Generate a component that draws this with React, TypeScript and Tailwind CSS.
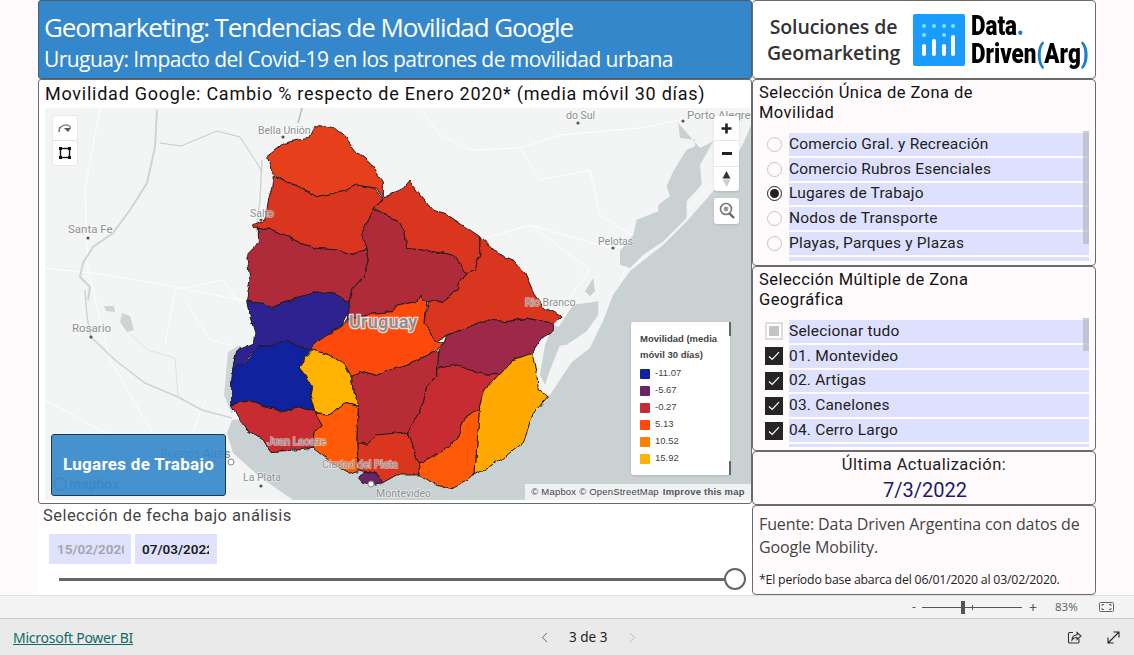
import { ChevronLeft, ChevronRight } from "lucide-react";

const din = "font-['Roboto','Noto_Sans',sans-serif]";
const segoe = "font-['Open_Sans','Noto_Sans',sans-serif]";

// departamentos, traced at 3x with origin 220,120
const depts: { c: string; p: string }[] = [
  { c: "#e63f1c", p: "140,110 160,95 190,70 235,60 265,55 280,25 300,17 340,22 375,50 410,95 450,130 490,185 490,232 470,205 410,195 370,215 320,225 290,230 255,210 200,185 160,160 150,130" },
  { c: "#d9351f", p: "160,165 200,185 255,210 290,230 370,215 410,195 465,205 487,235 460,268 428,345 438,380 410,405 350,390 290,385 240,370 190,345 150,325 105,325 100,315 130,300 140,270 145,240 155,205" },
  { c: "#b02b3a", p: "115,325 150,325 190,345 240,370 290,385 350,390 405,405 438,383 445,420 430,470 395,510 388,545 350,525 300,515 240,530 200,545 155,565 120,550 80,540 90,480 80,405 115,370" },
  { c: "#2e2291", p: "80,540 120,550 155,565 200,545 240,530 300,515 350,525 388,545 385,580 365,620 330,640 300,660 270,690 235,680 200,660 160,675 120,675 90,710 38,750 50,690 100,670 105,640 90,590" },
  { c: "#10229d", p: "38,750 90,715 120,675 160,675 200,660 235,680 270,690 237,742 255,765 275,800 270,825 283,875 240,860 190,875 130,860 85,840 35,855 35,780" },
  { c: "#b02b3a", p: "460,270 530,300 555,335 560,385 610,390 700,405 740,462 720,480 715,510 670,545 620,545 600,530 590,545 535,555 520,575 450,580 385,600 388,545 395,510 430,470 445,420 438,380 425,345" },
  { c: "#d9351f", p: "460,268 487,235 550,205 570,180 590,210 640,270 675,280 720,310 780,350 780,400 765,450 740,462 700,405 610,390 560,385 555,335 530,300" },
  { c: "#d9351f", p: "780,350 830,400 880,420 915,460 940,515 975,565 1025,590 1000,610 920,595 860,605 800,600 735,625 680,650 650,665 615,610 625,545 670,545 715,510 720,480 740,462 765,450 780,400" },
  { c: "#fb4a0c", p: "620,545 615,610 650,665 672,672 630,705 570,730 520,745 470,770 420,755 395,770 375,735 330,705 275,690 270,690 300,660 330,640 365,620 385,600 450,580 520,575 535,555 590,545 600,530" },
  { c: "#9d2848", p: "680,650 735,625 800,600 860,605 920,595 1000,610 1000,635 960,660 935,700 880,720 835,765 775,760 710,735 665,745 650,745 657,690 672,672" },
  { c: "#ffb300", p: "275,690 330,705 375,735 395,775 400,820 415,860 375,850 335,882 285,878 270,825 275,800 255,765 237,742" },
  { c: "#b82c36", p: "395,770 420,755 470,770 520,745 570,730 630,705 657,690 650,770 620,800 610,850 590,890 565,935 510,945 470,945 440,975 410,965 415,860 400,820" },
  { c: "#c62c32", p: "650,745 710,735 775,760 835,765 795,810 778,870 735,895 710,960 660,1000 595,1030 565,935 590,890 610,850 620,800 650,770" },
  { c: "#ffa800", p: "935,700 950,760 955,810 985,828 940,880 910,965 850,1015 765,1065 770,985 778,870 795,810 835,765 880,720" },
  { c: "#ff5a08", p: "778,870 770,985 765,1065 690,1105 640,1090 600,1065 595,1030 660,1000 710,960 735,895" },
  { c: "#d9351f", p: "410,965 440,975 470,945 565,935 595,1030 600,1065 530,1065 485,1090 475,1060 440,1055 415,1050 415,1020" },
  { c: "#6c2468", p: "412,1070 440,1055 475,1060 487,1088 450,1095 430,1090" },
  { c: "#ff5a08", p: "283,880 335,882 375,850 415,860 410,965 415,1050 390,1060 350,1040 280,985 285,935 305,915" },
  { c: "#c62c32", p: "35,855 85,840 130,860 190,875 240,860 283,875 305,915 285,935 280,985 230,990 150,995 130,960 80,930 50,885" },
];

const roads = [
  "45,268 100,274 155,283 240,300 260,302",
  "100,108 85,190 88,270 110,360 145,420 175,470",
  "165,345 175,290 222,280 262,330",
  "420,108 440,135 470,150 520,148 560,135 640,128 680,120",
  "520,148 540,180 590,170 600,215 640,240 620,280",
  "530,225 600,245 650,250 680,215 720,175",
  "480,240 530,225 590,270 560,310",
  "45,400 100,430 180,455 230,470",
  "185,300 210,340 230,345",
  "205,400 190,440",
];

const names = ["Comercio Gral. y Recreación", "Comercio Rubros Esenciales", "Lugares de Trabajo", "Nodos de Transporte", "Playas, Parques y Plazas"];
const zones = ["01. Montevideo", "02. Artigas", "03. Canelones", "04. Cerro Largo"];
const legend = [
  { c: "#10229d", t: "-11.07" },
  { c: "#6c2468", t: "-5.67" },
  { c: "#c62c32", t: "-0.27" },
  { c: "#fb4a0c", t: "5.13" },
  { c: "#ff8000", t: "10.52" },
  { c: "#ffb300", t: "15.92" },
];

function Label({ x, y, t, size = 10.5, fill = "#8d9192" }: { x: number; y: number; t: string; size?: number; fill?: string }) {
  return (
    <text x={x} y={y} fontSize={size} fill={fill} stroke="#ffffff" strokeOpacity={0.55} strokeWidth={1.6} paintOrder="stroke" fontFamily="Roboto, sans-serif">
      {t}
    </text>
  );
}

function UyMap() {
  return (
    <svg viewBox="45 108 706 392" className="absolute inset-0 w-full h-full">
      <defs>
        <filter id="rough" x="-5%" y="-5%" width="110%" height="110%" colorInterpolationFilters="sRGB">
          <feTurbulence type="fractalNoise" baseFrequency="0.1" numOctaves="2" seed="4" />
          <feDisplacementMap in="SourceGraphic" scale="5" xChannelSelector="R" yChannelSelector="G" />
        </filter>
      </defs>
      <rect x="45" y="108" width="706" height="392" fill="#f3f4f4" />
      {roads.map((r, i) => (
        <polyline key={i} points={r} fill="none" stroke="#ffffff" strokeWidth="1" />
      ))}
      {/* oceano y rio de la plata */}
      <polygon fill="#c9d1d3" points="751,125 747,135 730,171 710,195 687,221 663,245 630,271 613,295 603,321 590,348 572,362 565,372 550,395 400,400 232,420 227,433 233,453 260,477 293,500 751,500" />
      {/* lagoas */}
      <g transform="translate(530,108) scale(0.3333)" fill="#c9d1d3">
        <polygon points="445,45 450,90 495,95 495,115 470,125 445,165 430,190 410,235 420,265 385,290 385,310 320,335 310,380 270,430 270,470 300,480 340,440 400,400 440,360 470,330 470,280 515,230 510,170 550,100 510,120" />
        <polygon points="205,580 205,620 170,670 110,710 50,720 90,650 130,590" />
        <polygon points="165,550 190,510 195,550 180,565" />
      </g>
      <polygon fill="#c9d1d3" points="553,325 545,345 540,375 545,385 550,370 560,345 570,330" />
      {/* rios */}
      <polyline points="157,110 155,147 147,183 130,210 113,233 93,247 83,263 80,277 90,287 88,300" fill="none" stroke="#ced5d7" strokeWidth="2" />
      <polyline points="85,290 87,317 91,337 115,360 145,383 178,397 202,410 232,418" fill="none" stroke="#ced5d7" strokeWidth="1.5" />
      <polyline points="131,335 148,350 175,358 178,397" fill="none" stroke="#d5dadc" strokeWidth="0.8" />
      <polygon points="122,313 120,322 127,332 134,330 130,316" fill="#ced5d7" />
      <polygon points="104,306 106,311 115,312 114,306" fill="#ced5d7" />
      <polyline points="262,160 260,200 256,230" fill="none" stroke="#ced5d7" strokeWidth="1.5" />
      <polygon fill="#ced5d7" points="240,345 228,352 224,395 232,415 236,395 245,355" />
      {/* frontera */}
      <polyline points="160,143 181,146 217,131 240,137 257,163 262,172" fill="none" stroke="#c4c8c9" strokeWidth="1" />
      <polyline points="302,108 298,123" fill="none" stroke="#b9bdbe" strokeWidth="1.5" />
      <g filter="url(#rough)">
        <g transform="translate(220,120) scale(0.3333)" stroke="#1f1a1a" strokeWidth="3" strokeLinejoin="round">
          {depts.map((d, i) => (
            <polygon key={i} points={d.p} fill={d.c} />
          ))}
        </g>
      </g>
      <Label x={258} y={134} t="Bella Unión" />
      <Label x={250} y={217} t="Salto" />
      <Label x={68} y={233} t="Santa Fe" size={11.5} />
      <Label x={72} y={332} t="Rosario" size={11.5} />
      <Label x={566} y={119} t="do Sul" />
      <Label x={687} y={119} t="Porto Alegre" size={11.5} />
      <Label x={598} y={245} t="Pelotas" />
      <Label x={525} y={306} t="Rio Branco" />
      <Label x={160} y={458} t="Buenos Aires" size={12} fill="#7d8182" />
      <Label x={243} y={481} t="La Plata" />
      <Label x={267} y={445} t="Juan Lacaze" />
      <Label x={322} y={468} t="Ciudad del Plata" />
      <Label x={376} y={497} t="Montevideo" />
      <text x={349} y={328} fontSize={18} fontWeight={600} fill="#8a8f96" stroke="#ffffff" strokeOpacity={0.8} strokeWidth={2.5} paintOrder="stroke" fontFamily="Roboto, sans-serif" letterSpacing={0.2}>
        Uruguay
      </text>
      {[[283, 137], [261, 220], [88, 238], [91, 337], [578, 123], [683, 121], [613, 248], [548, 310], [261, 486], [293, 449], [357, 472]].map(([x, y], i) => (
        <circle key={i} cx={x} cy={y} r="1.6" fill="#555" />
      ))}
      <circle cx="231" cy="462" r="3" fill="#fff" stroke="#888" />
      <circle cx="371" cy="484" r="3" fill="#fff" stroke="#888" />
      <g fill="#8d9499" fontFamily="Roboto, sans-serif">
        <circle cx="60" cy="484" r="6" fill="none" stroke="#8d9499" strokeWidth="2" />
        <text x={69} y={489} fontSize={14} fontWeight={700}>mapbox</text>
      </g>
    </svg>
  );
}

function MapControls() {
  return (
    <>
      <div className="absolute left-[7px] top-[7px] w-[26px] h-[51px] bg-white rounded-[3px] border border-[#e8e8e8] flex flex-col">
        <div className="h-[25px] flex items-center justify-center border-b border-[#e2e2e2]">
          <svg width="16" height="14" viewBox="0 0 16 14" fill="none" stroke="#777" strokeWidth="1.2">
            <path d="M2 11 C2 3 13 2 13.5 7" />
            <path d="M2 11 L2.5 6" />
            <path d="M7 7 L14 7 L11 11 Z" fill="#555" stroke="none" />
          </svg>
        </div>
        <div className="flex-1 flex items-center justify-center">
          <svg width="14" height="14" viewBox="0 0 14 14" fill="none">
            <rect x="2.5" y="2.5" width="9" height="9" stroke="#111" strokeWidth="1.4" />
            <rect x="1" y="1" width="3" height="3" fill="#111" />
            <rect x="10" y="1" width="3" height="3" fill="#111" />
            <rect x="1" y="10" width="3" height="3" fill="#111" />
            <rect x="10" y="10" width="3" height="3" fill="#111" />
          </svg>
        </div>
      </div>
      <div className="absolute left-[669px] top-[8px] w-[25px] h-[75px] bg-white rounded-[3px] shadow-sm flex flex-col divide-y divide-[#e6e6e6]">
        <div className="flex-1 flex items-center justify-center">
          <svg width="11" height="11" viewBox="0 0 11 11"><path d="M4.2 0.5h2.6v3.7h3.7v2.6H6.8v3.7H4.2V6.8H0.5V4.2h3.7z" fill="#222" /></svg>
        </div>
        <div className="flex-1 flex items-center justify-center">
          <div className="w-[10px] h-[3px] bg-[#222]" />
        </div>
        <div className="flex-1 flex items-center justify-center">
          <svg width="9" height="18" viewBox="0 0 9 18">
            <path d="M4.5 1 L8.5 8.5 H0.5 Z" fill="#333" />
            <path d="M4.5 17 L8.5 9.5 H0.5 Z" fill="#ccc" />
          </svg>
        </div>
      </div>
      <div className="absolute left-[669px] top-[90px] w-[25px] h-[26px] bg-white rounded-[3px] shadow-sm flex items-center justify-center">
        <svg width="18" height="18" viewBox="0 0 18 18" fill="none">
          <circle cx="8" cy="7" r="5.5" stroke="#777" strokeWidth="1.6" />
          <circle cx="8" cy="7" r="2.4" fill="#999" />
          <path d="M11.5 11.5 L16 16" stroke="#666" strokeWidth="2.4" />
        </svg>
      </div>
    </>
  );
}

function MapLegend() {
  return (
    <div className="absolute left-[586px] top-[214px] w-[99px] h-[153px] bg-white rounded-[3px] shadow pl-[9px] pt-[9px] font-['Liberation_Sans',sans-serif] text-[#444]">
      <div className="absolute right-[-1px] top-0 w-[2px] h-[14px] bg-[#666]" />
      <div className="absolute right-[-1px] bottom-0 w-[2px] h-[14px] bg-[#666]" />
      <div className="text-[9.5px] font-bold leading-[16px]">Movilidad (media<br />móvil 30 días)</div>
      <div className="mt-[2px] flex flex-col">
        {legend.map((l) => (
          <div key={l.t} className="h-[17px] flex items-center gap-[5px] text-[9.5px]">
            <span className="w-[10px] h-[10px] rounded-[1px]" style={{ background: l.c }} />
            {l.t}
          </div>
        ))}
      </div>
    </div>
  );
}

function RadioList() {
  return (
    <div className="relative mt-[10px] ml-[8px] flex flex-col gap-[2px]">
      {names.map((n, i) => (
        <div key={n} className="flex items-center h-[22.8px]">
          <span className={`w-[15px] h-[15px] rounded-full border flex items-center justify-center shrink-0 ${i === 2 ? "border-[#222]" : "border-[#c9c4c4]"}`}>
            {i === 2 && <span className="w-[9px] h-[9px] rounded-full bg-[#222]" />}
          </span>
          <span className={`ml-[7px] w-[300px] h-full flex items-center bg-[#dee1fd] text-[15.5px] tracking-[0.2px] text-[#222] ${din}`}>{n}</span>
        </div>
      ))}
      <div className="ml-[22px] w-[300px] h-[4px] bg-[#dee1fd]" />
      <div className="absolute left-[316px] top-[-2px] w-[6px] h-[113px] bg-[#b8b8c0]/70" />
    </div>
  );
}

function CheckList() {
  return (
    <div className="relative mt-[10px] ml-[6px] flex flex-col gap-[2px]">
      <div className="flex items-center h-[22.8px]">
        <span className="w-[18px] h-[18px] border-2 border-[#ddd] bg-white flex items-center justify-center shrink-0">
          <span className="w-[10px] h-[10px] bg-[#c4c4c4]" />
        </span>
        <span className={`ml-[6px] w-[300px] h-full flex items-center bg-[#dee1fd] text-[15.5px] tracking-[0.2px] text-[#222] ${din}`}>Selecionar tudo</span>
      </div>
      {zones.map((z) => (
        <div key={z} className="flex items-center h-[22.8px]">
          <span className="w-[18px] h-[18px] bg-[#252525] flex items-center justify-center shrink-0">
            <svg width="12" height="10" viewBox="0 0 12 10" fill="none"><path d="M1 5.5 L4.2 8.5 L11 1.2" stroke="#fff" strokeWidth="1.2" /></svg>
          </span>
          <span className={`ml-[6px] w-[300px] h-full flex items-center bg-[#dee1fd] text-[15.5px] tracking-[0.2px] text-[#222] ${din}`}>{z}</span>
        </div>
      ))}
      <div className="ml-[24px] w-[300px] h-[3px] bg-[#dee1fd]" />
      <div className="absolute left-[318px] top-[-2px] w-[6px] h-[33px] bg-[#b8b8c0]/70" />
    </div>
  );
}

function Logo() {
  return (
    <div className="flex items-center">
      <svg width="52" height="52" viewBox="0 0 52 52" className="shrink-0">
        <rect width="52" height="52" rx="2" fill="#1a9cff" />
        {[11, 21, 31, 40].map((x) => (
          <circle key={x} cx={x} cy="12" r="2" fill="#7fe6ff" />
        ))}
        <circle cx="11" cy="21" r="2" fill="#7fe6ff" />
        <circle cx="31" cy="21" r="2" fill="#7fe6ff" />
        <rect x="9" y="30" width="4" height="12" rx="2" fill="#fff" />
        <rect x="19" y="25" width="4" height="17" rx="2" fill="#fff" />
        <rect x="29" y="30" width="4" height="12" rx="2" fill="#fff" />
        <rect x="38" y="21" width="4" height="21" rx="2" fill="#fff" />
      </svg>
      <div className="ml-[6px] w-[116px] font-['Roboto',sans-serif] font-black text-[28px] leading-[28px] text-black">
        <div className="origin-left scale-x-[0.8] whitespace-nowrap">Data<span className="text-[#1a7fc9]">.</span></div>
        <div className="origin-left scale-x-[0.8] whitespace-nowrap">Driven<span className="text-[#1a7fc9]">(</span>Arg<span className="text-[#1a7fc9]">)</span></div>
      </div>
    </div>
  );
}

export default function App() {
  const panel = "border border-[#6b6b6b] rounded-[4px] bg-[#fffafb]";
  return (
    <div className="w-[1134px] h-[655px] flex flex-col overflow-hidden bg-[#fffafb]">
      <div className="h-[595px] flex pl-[38px]">
        {/* columna izquierda */}
        <div className="w-[714px] flex flex-col">
          <div className="h-[79px] bg-[#3387ca] border border-[#4a6070] rounded-[3px] pl-[5px] pt-[8px] text-white font-['Open_Sans',sans-serif]">
            <div className="text-[26px] leading-[36px] tracking-[-1.1px] whitespace-nowrap">Geomarketing: Tendencias de Movilidad Google</div>
            <div className="text-[21px] leading-[28px] tracking-[-0.55px] whitespace-nowrap">Uruguay: Impacto del Covid-19 en los patrones de movilidad urbana</div>
          </div>
          <div className="h-[425px] bg-white border border-[#6b6b6b] rounded-[3px] pl-[6px]">
            <div className={`h-[27px] flex items-center text-[18px] text-[#111] tracking-[0.75px] whitespace-nowrap ${din}`}>
              Movilidad Google: Cambio % respecto de Enero 2020* (media móvil 30 días)
            </div>
            <div className="relative mt-[1px] w-[706px] h-[392px] overflow-hidden">
              <UyMap />
              <MapControls />
              <MapLegend />
              <div className={`absolute left-[6px] top-[326px] w-[175px] h-[62px] bg-[#3387ca]/90 border border-[#1c3a52] rounded-[3px] flex items-center justify-center text-white text-[17px] tracking-[0.3px] font-bold ${din}`}>
                Lugares de Trabajo
              </div>
              <div className="absolute right-0 bottom-0 w-[226px] h-[16px] bg-white/70 flex items-center justify-center gap-[4px] text-[9.5px] text-[#444] tracking-[0.2px] font-['Liberation_Sans',sans-serif]">
                <span>© Mapbox © OpenStreetMap</span>
                <span className="font-bold text-[#555]">Improve this map</span>
              </div>
            </div>
          </div>
          <div className="flex-1 bg-white pl-[5px]">
            <div className={`pt-[1px] text-[16.5px] leading-[22px] text-[#444] tracking-[0.45px] ${din}`}>Selección de fecha bajo análisis</div>
            <div className={`mt-[7px] ml-[6px] flex gap-[4px] text-[13.5px] font-semibold ${din}`}>
              <div className="w-[82px] h-[30px] bg-[#dfe1fd] pl-[8px] flex items-center text-[#a4a4ac]">
                <span className="block w-[67px] overflow-hidden whitespace-nowrap">15/02/2020</span>
              </div>
              <div className="w-[82px] h-[30px] bg-[#dfe1fd] pl-[7px] flex items-center text-[#1c1c1c]">
                <span className="block w-[67px] overflow-hidden whitespace-nowrap">07/03/2022</span>
              </div>
            </div>
            <div className="relative mt-[14px] ml-[16px] w-[676px] h-[3px] bg-[#666]">
              <div className="absolute right-[-11px] top-[-10px] w-[22px] h-[22px] rounded-full bg-white border-2 border-[#666]" />
            </div>
          </div>
        </div>
        {/* columna derecha */}
        <div className="w-[344px] flex flex-col">
          <div className="h-[79px] bg-white border border-[#6b6b6b] rounded-[4px] flex items-center pl-[14px]">
            <div className={`w-[133px] text-center text-[19.5px] leading-[26px] font-semibold text-[#333] tracking-[-0.1px] whitespace-nowrap ${segoe}`}>
              Soluciones de<br />Geomarketing
            </div>
            <div className="ml-[13px]"><Logo /></div>
          </div>
          <div className={`h-[187px] ${panel} pl-[6px] pt-[3px]`}>
            <div className={`text-[16.5px] leading-[20px] text-[#111] tracking-[0.45px] ${din}`}>Selección Única de Zona de<br />Movilidad</div>
            <RadioList />
          </div>
          <div className={`h-[185px] ${panel} pl-[6px] pt-[3px]`}>
            <div className={`text-[16.5px] leading-[20px] text-[#111] tracking-[0.45px] ${din}`}>Selección Múltiple de Zona<br />Geográfica</div>
            <CheckList />
          </div>
          <div className={`h-[54px] ${panel} text-center ${din}`}>
            <div className="pt-[2px] text-[16.5px] leading-[22px] text-[#222] tracking-[0.45px]">Última Actualización:</div>
            <div className="text-[20px] leading-[28px] text-[#1a1a6e] pl-[2px]">7/3/2022</div>
          </div>
          <div className={`h-[90px] ${panel} pl-[6px] pt-[7px] ${segoe}`}>
            <div className="text-[16px] leading-[23px] text-[#444] tracking-[-0.1px] whitespace-nowrap">Fuente: Data Driven Argentina con datos de<br />Google Mobility.</div>
            <div className="mt-[13px] text-[12.3px] leading-[16px] text-[#222] tracking-[-0.2px] whitespace-nowrap">*El período base abarca del 06/01/2020 al 03/02/2020.</div>
          </div>
        </div>
      </div>
      {/* barra de zoom */}
      <div className="h-[23px] bg-[#f3f3f3] border-t border-[#e3dfe0] flex items-center pl-[912px] text-[12px] text-[#555] font-['Noto_Sans',sans-serif]">
        <span className="w-[10px]">-</span>
        <div className="relative w-[100px] h-px bg-[#555]">
          <div className="absolute left-[39px] top-[-6px] w-[4px] h-[13px] bg-[#555]" />
          <div className="absolute left-[50px] top-[-2px] w-px h-[5px] bg-[#555]" />
        </div>
        <span className="ml-[7px] text-[14px]">+</span>
        <span className="ml-[18px] text-[11.5px] text-[#666]">83%</span>
        <svg width="15" height="10" viewBox="0 0 15 10" fill="none" className="ml-[21px]">
          <rect x="0.5" y="0.5" width="14" height="9" rx="1" stroke="#666" />
          <path d="M3 4 V2.5 H5 M10 2.5 H12 V4 M12 6 V7.5 H10 M5 7.5 H3 V6" stroke="#666" />
        </svg>
      </div>
      {/* pie de power bi */}
      <div className="h-[37px] bg-[#eaeaea] border-t border-[#c8c8c8] flex items-center pl-[13px] text-[14px] font-['Noto_Sans',sans-serif]">
        <a className="w-[120px] text-[#0f6b6b] underline tracking-[-0.25px] whitespace-nowrap">Microsoft Power BI</a>
        <ChevronLeft size={17} strokeWidth={1.4} className="ml-[403px] text-[#4a6a80]" />
        <span className="ml-[16px] w-[40px] text-[13.5px] text-[#222] whitespace-nowrap">3 de 3</span>
        <ChevronRight size={17} strokeWidth={1.4} className="ml-[15px] text-[#bdbdbd]" />
        <svg width="15" height="15" viewBox="0 0 15 15" fill="none" stroke="#333" strokeWidth="1.1" className="ml-[426px]">
          <path d="M6 2.5 H2.5 A1 1 0 0 0 1.5 3.5 V12 A1 1 0 0 0 2.5 13 H11 A1 1 0 0 0 12 12 V9" />
          <path d="M5 10 C5 6.5 7.5 5 10 5 V2.5 L14 6 L10 9.5 V7.5 C8 7.5 6 8.2 5 10 Z" fill="#eaeaea" />
        </svg>
        <svg width="15" height="15" viewBox="0 0 15 15" fill="none" stroke="#222" strokeWidth="1.1" className="ml-[24px]">
          <path d="M2 13 L13 2 M7.5 2 H13 V7.5 M2 7.5 V13 H7.5" />
        </svg>
      </div>
    </div>
  );
}
